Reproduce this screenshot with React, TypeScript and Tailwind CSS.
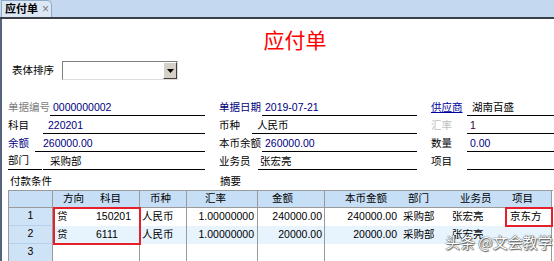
import React from "react";

type FieldProps = {
  label: string;
  labelW: number;
  value: string;
  pad: number;
  labelCls?: string;
  valueCls?: string;
  gap?: number;
};

const Field: React.FC<FieldProps & { w: number }> = ({ label, labelW, value, pad, labelCls, valueCls, w, gap }) => (
  <div className="flex items-end h-full" style={{ width: w }}>
    <div className={"shrink-0 whitespace-nowrap leading-[13px] pb-[2px] " + (labelCls ?? "")} style={{ width: labelW }}>
      {label}
    </div>
    {gap ? <div className="shrink-0" style={{ width: gap }} /> : null}
    <div
      className={"flex-1 h-full flex items-end whitespace-nowrap border-b border-black leading-[13px] pb-[1px] " + (valueCls ?? "")}
      style={{ paddingLeft: pad }}
    >
      {value}
    </div>
  </div>
);

const rows: FieldProps[][] = [
  [
    { label: "单据编号", labelW: 42, value: "0000000002", pad: 3, labelCls: "text-[#808080]", valueCls: "text-[#000080]" },
    { label: "单据日期", labelW: 43, value: "2019-07-21", pad: 3, labelCls: "text-[#000080]", valueCls: "text-[#000080]" },
    { label: "供应商", labelW: 36, value: "湖南百盛", pad: 5, labelCls: "text-[#0000a0] underline", valueCls: "text-black" },
  ],
  [
    { label: "科目", labelW: 35, value: "220201", pad: 5, labelCls: "text-black", valueCls: "text-[#000080]" },
    { label: "币种", labelW: 33, value: "人民币", pad: 5, labelCls: "text-black", valueCls: "text-black" },
    { label: "汇率", labelW: 36, value: "1", pad: 3, labelCls: "text-[#c0c0c0]", valueCls: "text-[#400040]" },
  ],
  [
    { label: "余额", labelW: 27, value: "260000.00", pad: 8, labelCls: "text-[#000080]", valueCls: "text-[#000080]" },
    { label: "本币余额", labelW: 43, value: "260000.00", pad: 3, labelCls: "text-black", valueCls: "text-[#000080]" },
    { label: "数量", labelW: 36, value: "0.00", pad: 3, labelCls: "text-black", valueCls: "text-[#000080]" },
  ],
  [
    { label: "部门", labelW: 34, gap: 1, value: "采购部", pad: 7, labelCls: "text-black border-b border-black", valueCls: "text-black" },
    { label: "业务员", labelW: 39, value: "张宏亮", pad: 2, labelCls: "text-black", valueCls: "text-black" },
    { label: "项目", labelW: 36, value: "", pad: 3, labelCls: "text-black", valueCls: "text-black" },
  ],
];

const head = ["", "方向", "科目", "币种", "汇率", "金额", "本币金额", "部门", "业务员", "项目"];
const headPad = ["", "pl-[10px]", "pl-[7px]", "pl-[10px]", "pl-[18px]", "pl-[14px]", "pl-[20px]", "pl-[8px]", "pl-[12px]", "pl-[12px]"];
const borderR = [true, false, true, true, true, true, false, false, false, true];

const body = [
  ["1", "贷", "150201", "人民币", "1.00000000", "240000.00", "240000.00", "采购部", "张宏亮", "京东方"],
  ["2", "贷", "6111", "人民币", "1.00000000", "20000.00", "20000.00", "采购部", "张宏亮", ""],
  ["3", "", "", "", "", "", "", "", "", ""],
];
const bodyAlign = [
  "justify-center",
  "pl-[4px]",
  "pl-[3px]",
  "pl-[2px]",
  "justify-end pr-[3px]",
  "justify-end pr-[2px]",
  "justify-end pr-[3px]",
  "pl-[3px]",
  "pl-[4px]",
  "pl-[10px]",
];

const App: React.FC = () => {
  return (
    <div className="relative w-[554px] h-[261px] overflow-hidden bg-white text-[10.5px] text-black font-['Liberation_Sans','Noto_Sans_CJK_SC',sans-serif]">
      {/* tab bar */}
      <div className="h-[19px] bg-[#c4d8ef] border-b-2 border-[#3a3f48] flex items-end pl-[1px]">
        <div className="h-[17px] w-[51px] bg-[#dce7f4] border border-b-0 border-[#8ea9cb] rounded-tr-[5px] flex items-center pl-[3px] gap-[4px]">
          <span className="font-bold text-[11px] leading-none">应付单</span>
          <span className="text-[#7a7a7a] text-[12px] leading-none">×</span>
        </div>
      </div>

      {/* body */}
      <div className="h-[242px] border-l-2 border-[#56657c] flex flex-col">
        <div className="mt-[10px] h-[23px] pl-[34px] text-center text-[21px] leading-[23px] text-[#ff0000]">
          应付单
        </div>

        <div className="mt-[9px] h-[19px] flex items-center pl-[10px]">
          <span className="w-[50px] whitespace-nowrap">表体排序</span>
          <div className="w-[116px] h-[19px] flex border border-t-[#808080] border-l-[#808080] border-b-[#e0ded8] border-r-[#e0ded8] bg-white">
            <div className="flex-1" />
            <div className="w-[14px] h-full bg-[#d4d0c8] border border-t-white border-l-white border-b-[#404040] border-r-[#404040] flex items-center justify-center">
              <svg width="7" height="4" viewBox="0 0 7 4">
                <path d="M0 0h7L3.5 4z" fill="#000" />
              </svg>
            </div>
          </div>
        </div>

        <div className="mt-[18px] flex flex-col">
          {rows.map((r, i) => (
            <div key={i} className="h-[18px] flex pl-[6px]">
              <Field {...r[0]} w={197} />
              <div className="w-[14px]" />
              <Field {...r[1]} w={198} />
              <div className="w-[14px]" />
              <Field {...r[2]} w={123} />
            </div>
          ))}
        </div>

        <div className="mt-[4px] h-[16px] flex items-center pl-[8px]">
          <span className="w-[210px]">付款条件</span>
          <span>摘要</span>
        </div>

        {/* grid */}
        <div className="relative ml-[6px] w-[545px] border-l border-t border-[#9a9a9a]">
          <div className="grid grid-cols-[44px_40px_47px_47px_71px_67px_75px_48px_52px_52px]">
            {head.map((h, c) => (
              <div
                key={"h" + c}
                className={
                  "h-[17px] flex items-center whitespace-nowrap bg-[#c7dff6] border-b border-[#9a9a9a] " +
                  headPad[c] +
                  (borderR[c] ? " border-r" : "")
                }
              >
                {h}
              </div>
            ))}
            {body.map((row, r) =>
              row.map((v, c) => (
                <div
                  key={r + "-" + c}
                  className={
                    "h-[18px] flex items-center whitespace-nowrap border-[#9a9a9a] " +
                    bodyAlign[c] +
                    (borderR[c] ? " border-r" : "") +
                    (c === 0
                      ? " bg-[#cfe3f7] border-b border-b-[#b8d0ea]"
                      : r === 1
                      ? " bg-[#e7f3fd]"
                      : " bg-white")
                  }
                >
                  {v}
                </div>
              ))
            )}
          </div>
          <div className="absolute left-[44px] top-[16px] w-[88px] h-[38px] border-2 border-[#e5202a]" />
          <div className="absolute left-[496px] top-[16px] w-[48px] h-[20px] border-2 border-[#e5202a]" />
        </div>
      </div>

      <div className="absolute left-[445px] top-[233px] text-[15px] leading-[18px] text-white [text-shadow:0_0_1px_#444,0_0_1px_#444,1px_1px_1px_#666] font-['Noto_Sans_CJK_SC',sans-serif]">
        头条 @文会教学
      </div>
    </div>
  );
};

export default App;
